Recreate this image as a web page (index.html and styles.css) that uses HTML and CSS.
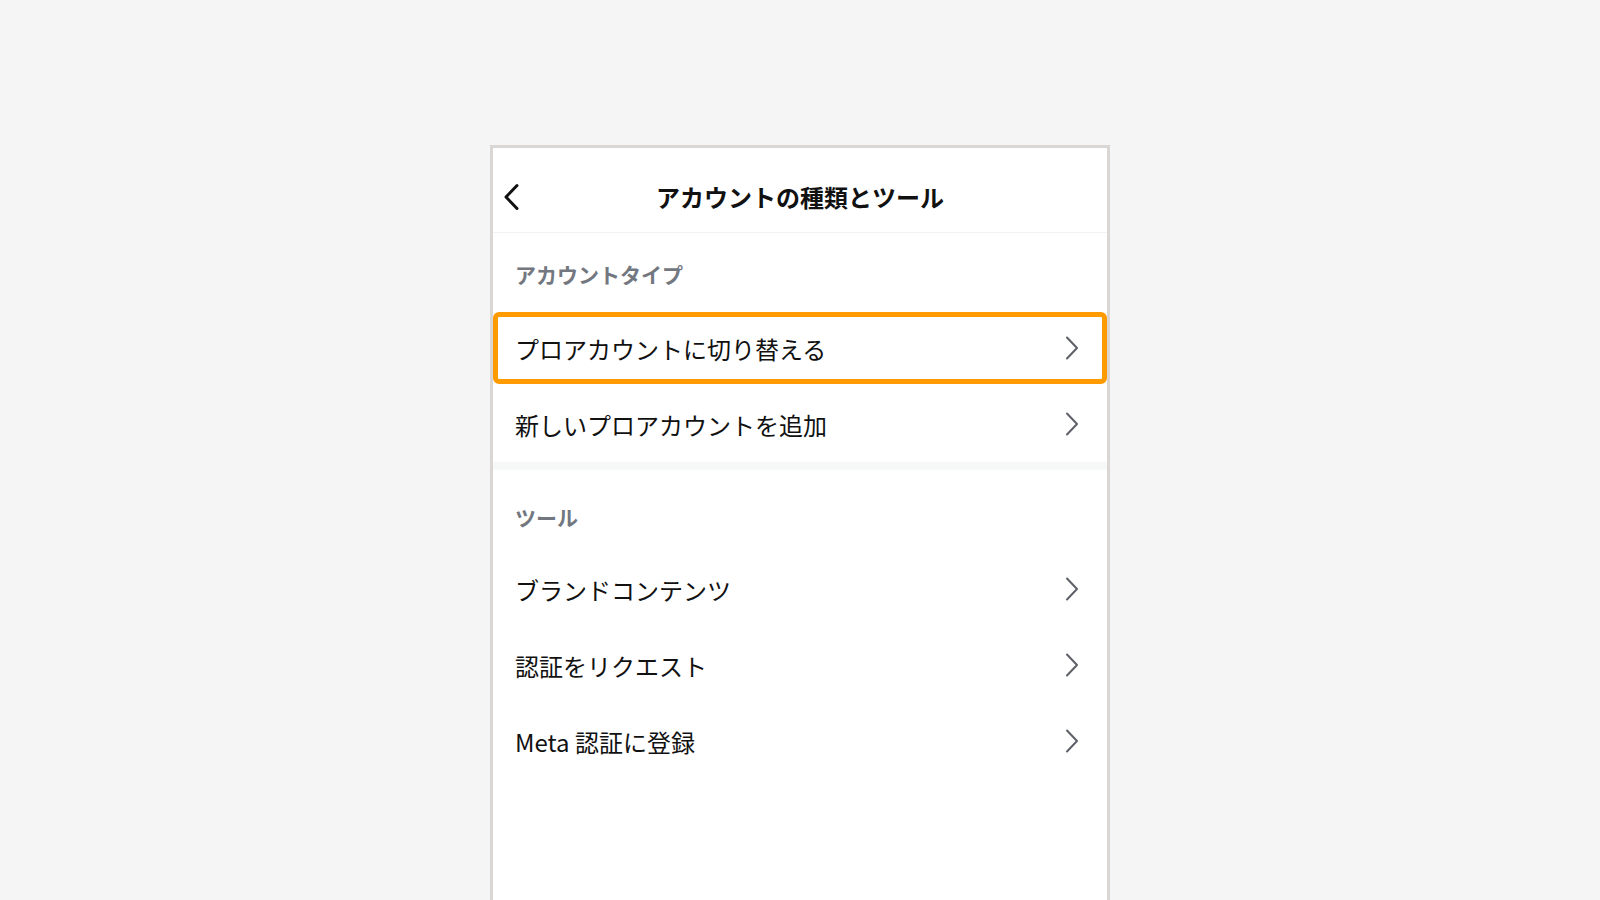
FILE: index.html
```html
<!DOCTYPE html>
<html lang="ja">
<head>
    <meta charset="UTF-8">
    <meta name="viewport" content="width=device-width, initial-scale=1.0">
    <title>アカウントの種類とツール</title>
    <link rel="stylesheet" href="styles.css">
</head>
<body>

    <div class="phone">
        <header class="top-bar">
            <button class="back-btn" aria-label="戻る">
                <svg width="18" height="28" viewBox="0 0 18 28"><path d="M15 2.5 L4 14 L15 25.5" /></svg>
            </button>
            <h1 class="title">アカウントの種類とツール</h1>
            <span></span>
        </header>

        <section class="group">
            <h2 class="group-label">アカウントタイプ</h2>
            <a class="row highlight" href="#">
                <span>プロアカウントに切り替える</span>
                <svg class="chevron" width="14" height="24" viewBox="0 0 14 24"><path d="M2 1.5 L12 12 L2 22.5" /></svg>
            </a>
            <a class="row" href="#">
                <span>新しいプロアカウントを追加</span>
                <svg class="chevron" width="14" height="24" viewBox="0 0 14 24"><path d="M2 1.5 L12 12 L2 22.5" /></svg>
            </a>
        </section>

        <div class="divider"></div>

        <section class="group tools">
            <h2 class="group-label">ツール</h2>
            <a class="row" href="#">
                <span>ブランドコンテンツ</span>
                <svg class="chevron" width="14" height="24" viewBox="0 0 14 24"><path d="M2 1.5 L12 12 L2 22.5" /></svg>
            </a>
            <a class="row" href="#">
                <span>認証をリクエスト</span>
                <svg class="chevron" width="14" height="24" viewBox="0 0 14 24"><path d="M2 1.5 L12 12 L2 22.5" /></svg>
            </a>
            <a class="row" href="#">
                <span>Meta 認証に登録</span>
                <svg class="chevron" width="14" height="24" viewBox="0 0 14 24"><path d="M2 1.5 L12 12 L2 22.5" /></svg>
            </a>
        </section>
    </div>

</body>
</html>
```

FILE: styles.css
```css
body {
    font-family: "Noto Sans CJK JP", "Noto Sans", sans-serif;
    margin: 0;
    padding-top: 145px;
    background-color: #f5f5f5;
    overflow: hidden;
}

.phone {
    width: 614px;
    height: 780px;
    margin: 0 auto;
    background: white;
    border: 3px solid #d9d6d3;
    border-bottom: none;
}

.top-bar {
    height: 70px;
    padding-top: 14px;
    display: grid;
    grid-template-columns: 1fr auto 1fr;
    align-items: center;
    border-bottom: 1px solid #f2f2f2;
}

.back-btn {
    justify-self: start;
    background: none;
    border: none;
    padding: 0 0 0 9px;
    display: flex;
    cursor: pointer;
}

.back-btn path {
    fill: none;
    stroke: #111;
    stroke-width: 3;
    stroke-linecap: round;
    stroke-linejoin: round;
}

.title {
    margin: 0;
    font-size: 24px;
    font-weight: 700;
    color: #111;
    line-height: 32px;
}

.group-label {
    margin: 0;
    padding: 27px 22px 22px;
    font-size: 21px;
    line-height: 28px;
    font-weight: 700;
    color: #737780;
}

.tools .group-label {
    padding-top: 33px;
    padding-bottom: 20px;
}

.row {
    position: relative;
    height: 76px;
    padding: 0 28px 0 22px;
    display: flex;
    align-items: center;
    justify-content: space-between;
    font-size: 24px;
    color: #111;
    text-decoration: none;
}

.row.highlight::after {
    content: "";
    position: absolute;
    inset: 2px 0;
    border: 5px solid #ff9a00;
    border-radius: 6px;
}

.chevron path {
    fill: none;
    stroke: #5e6167;
    stroke-width: 2;
    stroke-linecap: round;
    stroke-linejoin: round;
}

.divider {
    height: 8px;
    background: #f7f8f8;
}
```
